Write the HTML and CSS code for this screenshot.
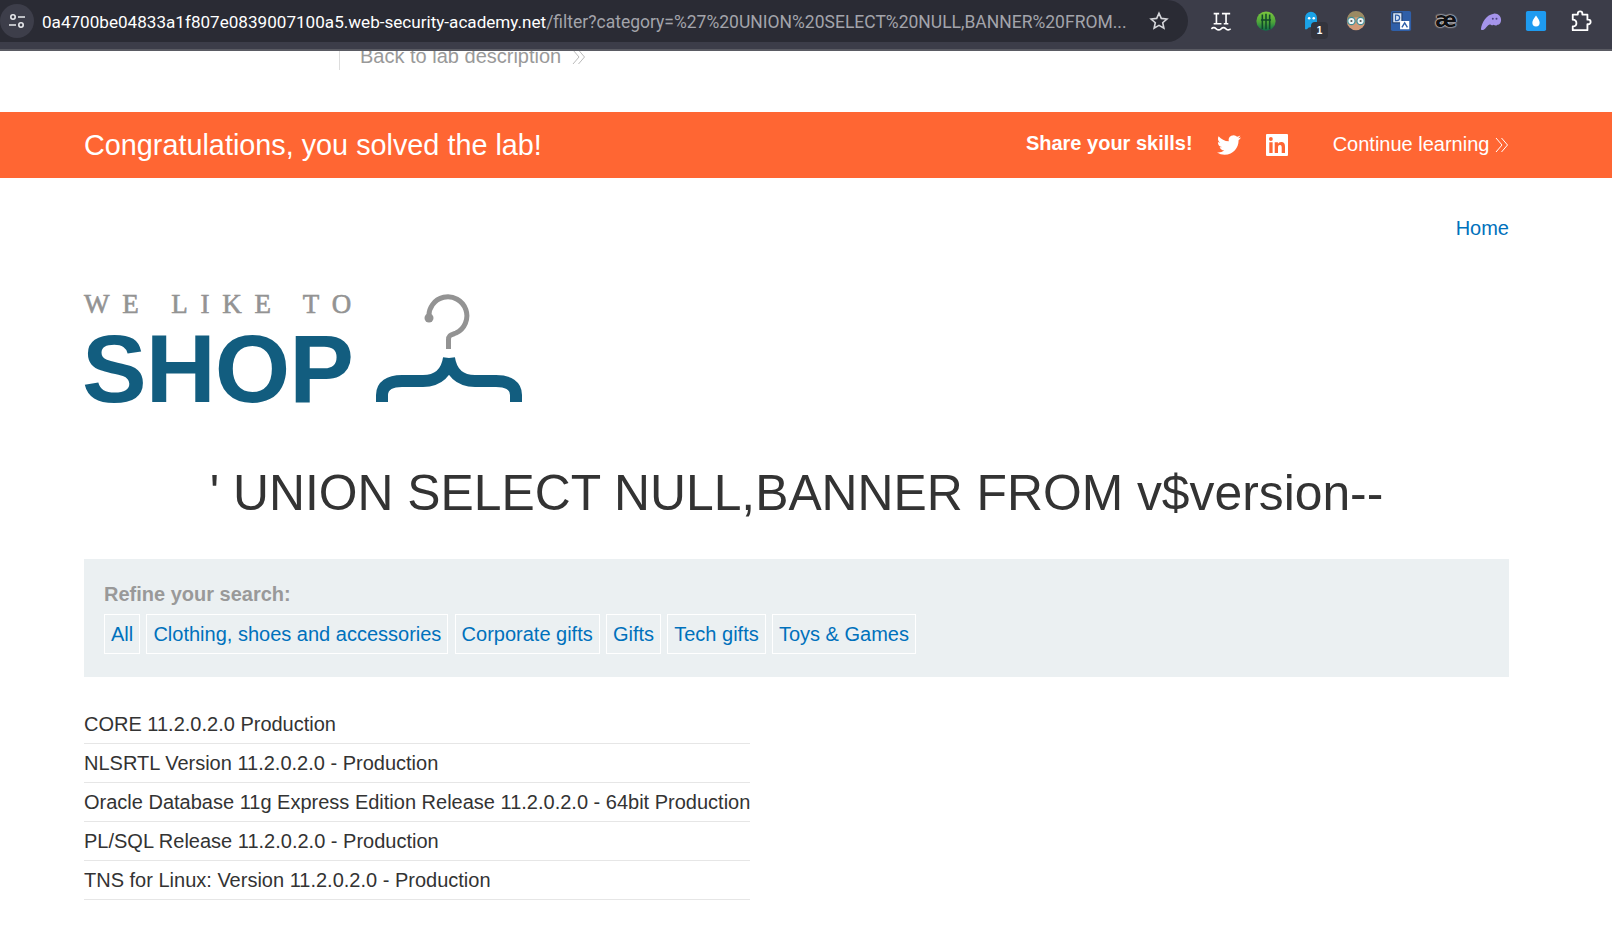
FILE: index.html
```html
<!DOCTYPE html>
<html>

<head>
    <meta http-equiv="Content-Type" content="text/html; charset=utf-8" />
    <title>Lab: SQL injection attack, querying the database type and version</title>
    <link rel="stylesheet" href="styles.css">
</head>

<body>
    <div id="toolbar">
        <div id="omnibox">
            <span id="siteInfo">
                <svg width="20" height="20" viewBox="0 0 20 20" fill="none" stroke="#e8eaed" stroke-width="1.6">
                    <circle cx="6" cy="6" r="2.2" />
                    <path d="M11 6h7M2 14h7" />
                    <circle cx="14" cy="14" r="2.2" />
                </svg>
            </span>
            <span id="url"><span class="host">0a4700be04833a1f807e0839007100a5.web-security-academy.net</span><span class="path">/filter?category=%27%20UNION%20SELECT%20NULL,BANNER%20FROM...</span></span>
            <svg class="star" width="20" height="20" viewBox="0 0 20 20" fill="none" stroke="#d5d6da" stroke-width="1.6">
                <path d="M10 2.2l2.3 5.2 5.6.6-4.2 3.7 1.2 5.5-4.9-2.8-4.9 2.8 1.2-5.500L2.100 8l5.600-.6z" />
            </svg>
        </div>
        <div id="extensions">
            <svg class="ext" viewBox="0 0 24 24" fill="none" stroke="#fff" stroke-width="1.800">
                <path d="M4 4h6M7 4v11M4 15h8.500M13 4h9M17.500 4v11M15 15h5" />
                <path d="M1.500 20.500q2.600-2.500 5.300 0t5.300 0 5.300 0 5.100 0" />
            </svg>
            <svg class="ext" viewBox="0 0 24 24">
                <defs>
                    <linearGradient id="greenBall" x1="0" y1="0" x2="0" y2="1">
                        <stop offset="0" stop-color="#7cc83e" />
                        <stop offset="0.55" stop-color="#4ea63a" />
                        <stop offset="1" stop-color="#0f6d4a" />
                    </linearGradient>
                </defs>
                <circle cx="12" cy="12" r="10.500" fill="url(#greenBall)" />
                <path d="M8 5v16M12 4v17M16 5v16M6.500 11h11" stroke="#124a2a" stroke-width="1.700" fill="none" />
            </svg>
            <span class="extBadged">
                <svg class="ext" viewBox="0 0 24 24">
                    <path d="M5.500 21V8.500a6.500 6.500 0 0 1 13 0V17l-3 1-3 .500-3 .500-2 2z" fill="#1ba3e8" />
                    <circle cx="10" cy="9" r="1.400" fill="#fff" />
                    <circle cx="15" cy="9" r="1.400" fill="#fff" />
                </svg>
                <span class="badge">1</span>
            </span>
            <svg class="ext" viewBox="0 0 24 24">
                <circle cx="12" cy="12" r="10" fill="#d19a78" />
                <path d="M2.500 10a9.500 9 0 0 1 19 0c-4-3-8-3-19 0z" fill="#9a8a63" />
                <circle cx="7" cy="12" r="4" fill="#eef4f5" stroke="#3c8d96" stroke-width="1.300" />
                <circle cx="17" cy="12" r="4" fill="#eef4f5" stroke="#3c8d96" stroke-width="1.300" />
                <circle cx="7" cy="12" r="1.200" fill="#555" />
                <circle cx="17" cy="12" r="1.200" fill="#555" />
            </svg>
            <svg class="ext" viewBox="0 0 24 24">
                <rect x="1" y="1" width="22" height="22" rx="2" fill="#2f5fa8" />
                <rect x="3" y="3" width="10" height="11" fill="#dbe6f5" stroke="#16315c" />
                <path d="M11 12h10v9H11z" fill="#fff" />
                <path d="M13 19l3-5 3 5" stroke="#2f5fa8" stroke-width="1.500" fill="none" />
                <path d="M6 5.500v6h1.500a3 3 0 0 0 0-6z" stroke="#2f5fa8" stroke-width="1.300" fill="none" />
            </svg>
            <span class="aeIcon">æ</span>
            <svg class="ext" viewBox="0 0 24 24">
                <path d="M1 21c1-8 6-16 14-17 5-.500 8 3 8 7 0 3-2 6-4 5-1.500 1.500-3 1-4 0-2 1-3 .500-4-.500-3 1-5 5-7 6-1 .500-3 .500-3-.500z" fill="#a594ea" />
                <circle cx="14" cy="9.500" r="1.100" fill="#4c4480" />
                <circle cx="18" cy="9.500" r="1.100" fill="#4c4480" />
            </svg>
            <svg class="ext" viewBox="0 0 24 24">
                <rect x="1" y="1" width="22" height="22" rx="2" fill="#1e9bf0" />
                <path d="M12 6c2.500 3.500 4 5.500 4 8a4 4 0 0 1-8 0c0-2.500 1.500-4.500 4-8z" fill="#fff" />
            </svg>
            <svg class="ext" viewBox="0 0 24 24" fill="none" stroke="#fff" stroke-width="2" stroke-linejoin="round">
                <path d="M3 5h5.500V4a2.500 2.500 0 0 1 5 0v1H19v5.500h1a2.500 2.500 0 0 1 0 5h-1V22H3v-4c3 0 4-1.500 4-3.500S6 10.500 3 10.500z" />
            </svg>
        </div>
    </div>

    <div id="labHeader">
        <a class="backLink" href="#">Back to lab description <svg class="chevrons" viewBox="0 0 14 16" fill="none" stroke="#bbb"><path d="M1 1l6 7-6 7M6.500 1l6 7-6 7" /></svg></a>
    </div>

    <div id="solved">
        <h4>Congratulations, you solved the lab!</h4>
        <div id="share">
            <span class="shareText">Share your skills!</span>
            <svg class="social twitter" viewBox="0 0 24 24" fill="#fff">
                <path d="M23.950 4.570a10 10 0 0 1-2.820.770 4.960 4.960 0 0 0 2.160-2.720c-.950.550-2 .950-3.130 1.180a4.920 4.920 0 0 0-8.380 4.480C7.690 8.100 4.070 6.130 1.640 3.160a4.820 4.820 0 0 0-.670 2.480c0 1.710.870 3.210 2.190 4.100a4.900 4.900 0 0 1-2.230-.620v.060a4.920 4.920 0 0 0 3.950 4.830 5 5 0 0 1-2.210.080 4.940 4.940 0 0 0 4.600 3.420A9.870 9.870 0 0 1 0 19.540a14 14 0 0 0 7.560 2.210c9.050 0 14-7.500 14-13.980 0-.210 0-.420-.020-.630A9.940 9.940 0 0 0 24 4.590z" />
            </svg>
            <svg class="social linkedin" viewBox="0 0 24 24">
                <path fill="#fff" d="M22 1H2a1 1 0 0 0-1 1v20a1 1 0 0 0 1 1h20a1 1 0 0 0 1-1V2a1 1 0 0 0-1-1zM7.600 20H4.300V9.300h3.300zM5.900 7.900a1.900 1.900 0 1 1 0-3.800 1.900 1.900 0 0 1 0 3.800zM20 20h-3.300v-5.200c0-1.200 0-2.800-1.700-2.800s-2 1.300-2 2.700V20H9.700V9.300h3.200v1.500c.500-.900 1.600-1.800 3.200-1.800 3.400 0 3.900 2.200 3.900 5.100z" />
            </svg>
            <a class="continue" href="#">Continue learning <svg class="chevrons" viewBox="0 0 14 16" fill="none" stroke="currentColor"><path d="M1 1l6 7-6 7M6.500 1l6 7-6 7" /></svg></a>
        </div>
    </div>

    <div id="content">
        <div id="nav"><a href="#">Home</a></div>

        <div id="logo">
            <div class="logoText">
                <div class="weLike">WE LIKE TO</div>
                <div class="shop">SHOP</div>
            </div>
            <svg class="hanger" width="146" height="108" viewBox="0 0 146 108" fill="none">
                <path d="M53 24A19 19 0 1 1 80 39C75 41 72.500 41 72.500 46V55" stroke="#939393" stroke-width="5" />
                <circle cx="53" cy="24" r="4.500" fill="#939393" />
                <path d="M6 108V101C6 92 13 87 26 87H47C63 87 71 78 73 64" stroke="#125d7f" stroke-width="12" />
                <path d="M140 108V101C140 92 133 87 120 87H99C83 87 75 78 73 64" stroke="#125d7f" stroke-width="12" />
            </svg>
        </div>

        <h1 id="title">' UNION SELECT NULL,BANNER FROM v$version--</h1>

        <section id="filters">
            <div class="refine">Refine your search:</div>
            <div class="tags">
                <a href="#">All</a>
                <a href="#">Clothing, shoes and accessories</a>
                <a href="#">Corporate gifts</a>
                <a href="#">Gifts</a>
                <a href="#">Tech gifts</a>
                <a href="#">Toys &amp; Games</a>
            </div>
        </section>

        <table id="results">
            <tr><th>CORE 11.2.0.2.0 Production</th></tr>
            <tr><th>NLSRTL Version 11.2.0.2.0 - Production</th></tr>
            <tr><th>Oracle Database 11g Express Edition Release 11.2.0.2.0 - 64bit Production</th></tr>
            <tr><th>PL/SQL Release 11.2.0.2.0 - Production</th></tr>
            <tr><th>TNS for Linux: Version 11.2.0.2.0 - Production</th></tr>
        </table>
    </div>
</body>

</html>
```

FILE: styles.css
```css
* {
    margin: 0;
    padding: 0;
    box-sizing: border-box;
}

html,
body {
    height: 948px;
    overflow: hidden;
}

body {
    background: #fff;
    color: #333;
    font-family: "Liberation Sans", Arial, sans-serif;
    font-size: 20px;
}

a {
    text-decoration: none;
    color: #0071bc;
}

#toolbar {
    height: 51px;
    display: flex;
    align-items: flex-start;
    background: #3c3d49;
    border-bottom: 2px solid #5a5b63;
}

#omnibox {
    width: 1188px;
    height: 42px;
    display: flex;
    align-items: center;
    background: #2a2b34;
    border-radius: 0 21px 21px 0;
}

#siteInfo {
    width: 34px;
    height: 34px;
    display: flex;
    align-items: center;
    justify-content: center;
    background: #3d3e4a;
    border-radius: 50%;
}

#url {
    margin-left: 8px;
    flex: 1;
    font-family: "Roboto", "Liberation Sans", sans-serif;
    white-space: nowrap;
    overflow: hidden;
}

.host {
    color: #fff;
    font-size: 17.100px;
}

.path {
    color: #a3a4ab;
    font-size: 17.500px;
}

.star {
    margin-right: 19px;
    margin-left: 14px;
    flex: none;
}

#extensions {
    flex: 1;
    height: 42px;
    display: flex;
    align-items: center;
    justify-content: space-between;
    padding: 0 20px 0 22px;
}

.ext {
    width: 22px;
    height: 22px;
    display: block;
}

.extBadged {
    position: relative;
    display: block;
}

.badge {
    position: absolute;
    left: 11px;
    top: 12px;
    width: 17px;
    height: 17px;
    background: #33343d;
    border-radius: 4px;
    color: #fff;
    font-size: 10px;
    font-weight: bold;
    line-height: 17px;
    text-align: center;
}

.aeIcon {
    width: 22px;
    height: 22px;
    font-family: "DejaVu Sans", sans-serif;
    font-size: 21px;
    font-weight: bold;
    line-height: 20px;
    text-align: center;
    color: #101114;
    text-shadow: 0 0 1.500px #e0e0e0, 0 0 1.500px #e0e0e0, 0 0 1.500px #e0e0e0;
}

#labHeader {
    height: 61px;
    padding-left: 339px;
    overflow: hidden;
}

.backLink {
    display: block;
    height: 24px;
    margin-top: -5px;
    padding-left: 20px;
    border-left: 1px solid #ddd;
    color: #999;
    line-height: 20px;
    white-space: nowrap;
}

.chevrons {
    width: 14px;
    height: 16px;
    margin-left: 5px;
    vertical-align: -2px;
}

#solved {
    height: 66px;
    padding: 0 103px 0 84px;
    display: flex;
    align-items: center;
    justify-content: space-between;
    background: #ff6633;
    color: #fff;
}

#solved h4 {
    font-size: 28.800px;
    font-weight: normal;
}

#share {
    display: flex;
    align-items: center;
}

.shareText {
    font-weight: bold;
    margin-top: -3px;
}

.social {
    display: block;
    fill: #fff;
}

.twitter {
    width: 24px;
    height: 24px;
    margin-left: 24px;
}

.linkedin {
    width: 24px;
    height: 24px;
    margin-left: 24px;
}

.continue {
    margin-left: 44px;
    margin-top: -2px;
    color: #fff;
    white-space: nowrap;
}

.continue .chevrons {
    margin-left: 0;
}

#content {
    padding: 0 103px 0 84px;
}

#nav {
    padding-top: 39px;
    text-align: right;
    line-height: 23px;
}

#logo {
    margin-top: 49px;
    height: 113px;
    display: flex;
    align-items: flex-end;
}

.logoText {
    width: 292px;
}

.weLike {
    margin-bottom: 19px;
    font-family: "Liberation Serif", serif;
    font-size: 27px;
    line-height: 24px;
    letter-spacing: 12.800px;
    color: #939393;
    -webkit-text-stroke: 0.6px #939393;
    white-space: pre;
}

.shop {
    margin-left: -2px;
    font-size: 97px;
    font-weight: bold;
    line-height: 67px;
    letter-spacing: -1px;
    color: #125d7f;
}

.hanger {
    display: block;
}

#title {
    margin-top: 62px;
    font-size: 49.800px;
    font-weight: normal;
    line-height: 58px;
    text-align: center;
}

#filters {
    margin-top: 37px;
    height: 118px;
    padding: 24px 20px 0;
    background: #ebf0f2;
}

.refine {
    font-weight: bold;
    color: #999;
    line-height: 23px;
}

.tags {
    display: flex;
    gap: 6.200px;
    margin-top: 8px;
}

.tags a {
    height: 40px;
    padding: 0 6px;
    line-height: 38px;
    border: 1px solid #fff;
}

#results {
    margin-top: 27px;
    border-collapse: collapse;
}

#results th {
    height: 39px;
    padding: 2px 0 0;
    font-weight: normal;
    text-align: left;
    border-bottom: 1px solid #e6e6e6;
    line-height: 23px;
}
```
